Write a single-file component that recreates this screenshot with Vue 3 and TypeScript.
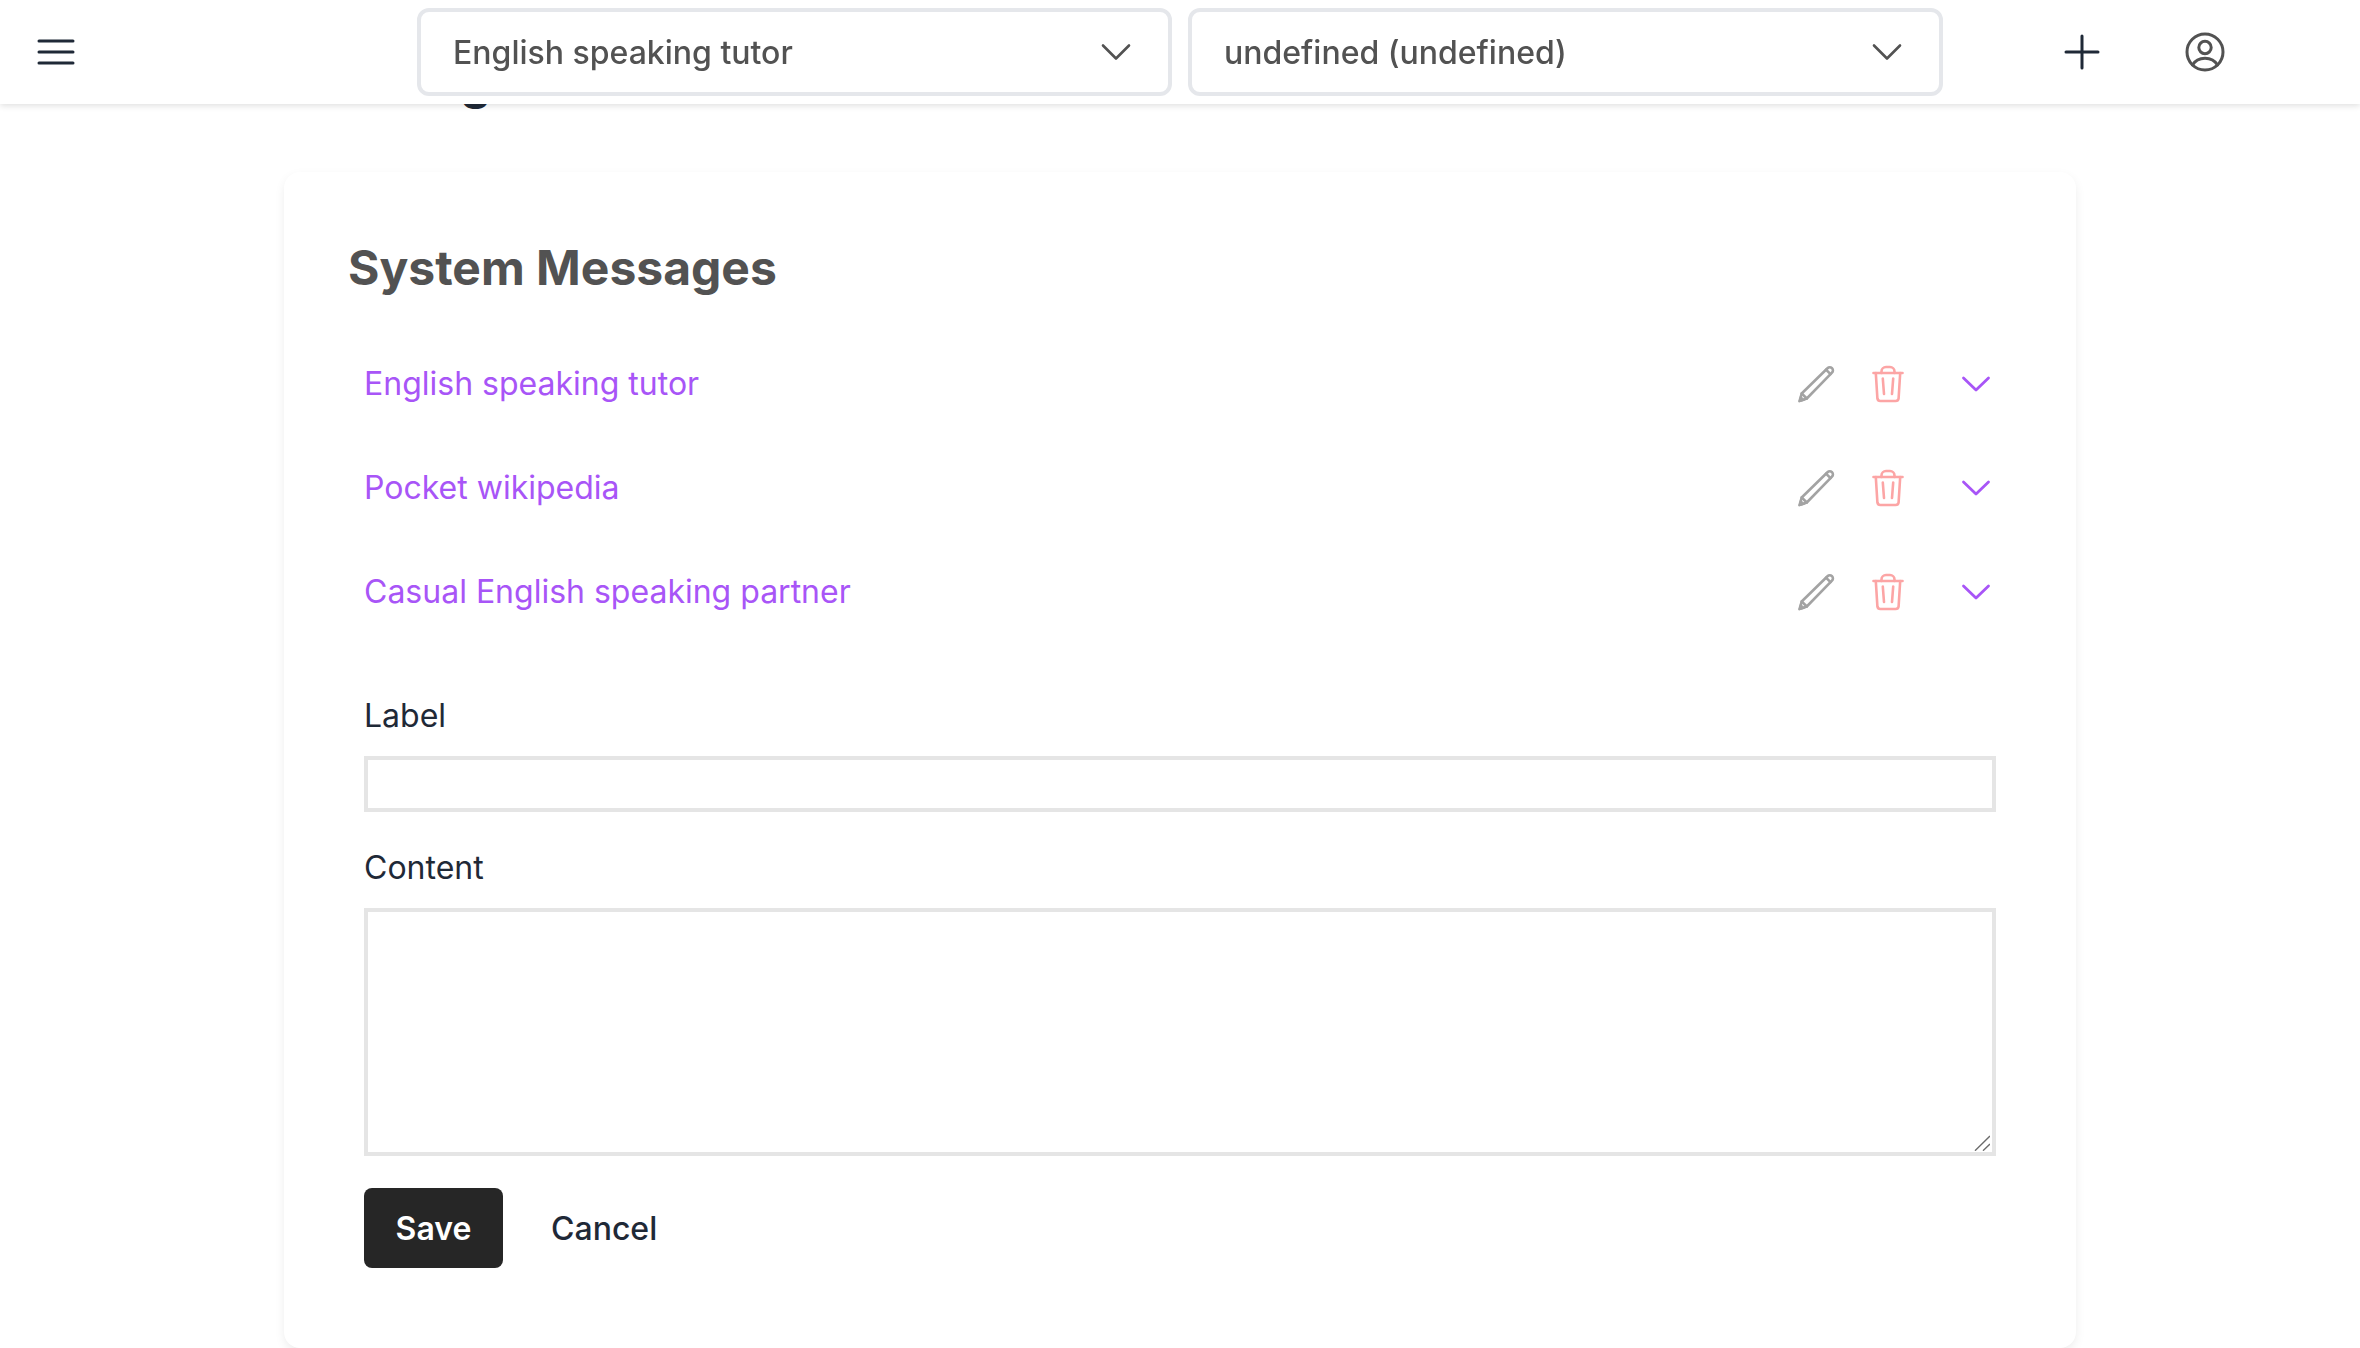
<script setup lang="ts">
const messages: string[] = ['English speaking tutor', 'Pocket wikipedia', 'Casual English speaking partner']
</script>

<template>
  <div class="page">
    <header class="topbar">
      <button class="icon-btn menu" aria-label="Menu">
        <svg width="48" height="48" viewBox="0 0 48 48" fill="none" stroke="#1f2937" stroke-width="3" stroke-linecap="round">
          <path d="M7 13h34M7 24h34M7 35h34" />
        </svg>
      </button>
      <div class="selector">
        <span>English speaking tutor</span>
        <svg width="32" height="32" viewBox="0 0 32 32" fill="none" stroke="#525252" stroke-width="2.6" stroke-linecap="round" stroke-linejoin="round"><path d="M3 9.500l13 13 13-13" /></svg>
      </div>
      <div class="selector second">
        <span>undefined (undefined)</span>
        <svg width="32" height="32" viewBox="0 0 32 32" fill="none" stroke="#525252" stroke-width="2.6" stroke-linecap="round" stroke-linejoin="round"><path d="M3 9.500l13 13 13-13" /></svg>
      </div>
      <button class="icon-btn plus" aria-label="Add">
        <svg width="48" height="48" viewBox="0 0 48 48" fill="none" stroke="#1f2937" stroke-width="3" stroke-linecap="round"><path d="M24 8v32M8 24h32" /></svg>
      </button>
      <button class="icon-btn user" aria-label="Account">
        <svg width="48" height="48" viewBox="0 0 48 48" fill="none" stroke="#525252" stroke-width="3" stroke-linecap="round"><circle cx="24" cy="24" r="18" /><circle cx="24" cy="19.500" r="6.200" /><path d="M11.500 37c2.500-4.400 7-6.800 12.500-6.800s10 2.400 12.500 6.800" /></svg>
      </button>
    </header>

    <main class="content">
      <h1 class="page-title">Settings</h1>
      <section class="card">
        <h2 class="card-title">System Messages</h2>
        <ul class="list">
          <li v-for="m in messages" :key="m" class="row">
            <a class="row-label">{{ m }}</a>
            <svg class="pencil" width="40" height="40" viewBox="0 0 40 40" fill="none" stroke="#a3a3a3" stroke-width="2.600" stroke-linejoin="round" stroke-linecap="round">
              <path d="M3.500 37l2.200-7.500L31.500 4.200a3.200 3.200 0 0 1 4.500 0 3.200 3.200 0 0 1 0 4.500L10.800 34.500z" />
              <path d="M5.700 29.500l5.100 5M30 5.700l4.500 4.500" />
              <path d="M3 37.500l1.500-5.500 4 4z" fill="#a3a3a3" stroke-width="1" />
            </svg>
            <svg class="trash" width="40" height="40" viewBox="0 0 40 40" fill="none" stroke="#fca5a5" stroke-width="2.600" stroke-linejoin="round" stroke-linecap="round">
              <path d="M5.500 9h29" />
              <path d="M13.500 9V7.500a4.500 4.500 0 0 1 4.500-4.500h4a4.500 4.500 0 0 1 4.500 4.500V9" />
              <path d="M7.800 9l1.600 25.500A3 3 0 0 0 12.400 37h15.200a3 3 0 0 0 3-2.500L32.200 9" />
              <path d="M14.800 14.500l1.200 15.500M25.200 14.500l-1.200 15.500" />
            </svg>
            <svg class="chev" width="40" height="40" viewBox="0 0 40 40" fill="none" stroke="#a855f7" stroke-width="2.800" stroke-linejoin="round" stroke-linecap="round">
              <path d="M7.500 14l12.500 12 12.500-12" />
            </svg>
          </li>
        </ul>
        <form class="form" @submit.prevent>
          <label class="field-label" for="label">Label</label>
          <input id="label" class="input" type="text" />
          <label class="field-label content-label" for="content">Content</label>
          <div class="textarea-wrap">
            <textarea id="content" class="textarea"></textarea>
            <svg class="grip" width="16" height="16" viewBox="0 0 16 16" fill="none" stroke="#6b6b6b" stroke-width="1.400"><path d="M1 15.700L16 1M9 15.700L16 9" /></svg>
          </div>
          <div class="actions">
            <button class="save" type="submit">Save</button>
            <button class="cancel" type="button">Cancel</button>
          </div>
        </form>
      </section>
    </main>
  </div>
</template>

<style>
html, body { margin: 0; background: #fff; overflow: hidden; }
</style>

<style scoped>
* { box-sizing: border-box; }
.page { font-family: Inter, "Liberation Sans", sans-serif; color: #1f2937; height: 1348px; overflow: hidden; }
.topbar {
  position: fixed; top: 0; left: 0; right: 0; z-index: 5;
  height: 104px; background: #fff;
  display: flex; align-items: center; padding-left: 32px;
  box-shadow: 0 2px 6px rgba(0, 0, 0, 0.12);
}
.icon-btn { width: 48px; height: 48px; padding: 0; border: 0; background: none; display: block; }
.icon-btn svg { display: block; }
.menu { margin-right: 337px; }
.selector {
  width: 755px; height: 88px; border: 4px solid #e5e7eb; border-radius: 12px;
  display: flex; align-items: center; justify-content: space-between;
  padding: 0 36px 0 32px;
  font-size: 32px; font-weight: 500; color: #525252;
}
.second { margin-left: 16px; }
.plus { margin-left: 115px; }
.user { margin-left: 75px; }
.content { padding-top: 50px; display: flex; flex-direction: column; }
.page-title { margin: 0 0 58px 324px; height: 64px; font-size: 48px; line-height: 64px; font-weight: 700; color: #1f2937; }
.card {
  margin-left: 284px; width: 1792px; height: 1176px; padding: 64px 80px 80px 64px;
  background: #fff; border-radius: 16px;
  box-shadow: 0 4px 12px -2px rgba(0, 0, 0, 0.1);
}
.card-title { margin: 0; font-size: 48px; line-height: 64px; font-weight: 700; color: #525252; }
.list { list-style: none; margin: 32px 0 48px; padding: 0 0 0 16px; }
.row { height: 104px; display: flex; align-items: center; }
.row-label { flex: 1; font-size: 32px; line-height: 48px; color: #a855f7; }
.row svg { display: block; }
.trash { margin-left: 32px; }
.chev { margin-left: 48px; }
.form { padding-left: 16px; display: flex; flex-direction: column; align-items: stretch; }
.field-label { font-size: 32px; line-height: 48px; margin-bottom: 16px; color: #1f2937; }
.content-label { margin-top: 32px; }
.input { display: block; width: 100%; height: 56px; border: 4px solid #e5e5e5; border-radius: 0; background: #fff; outline: none; }
.textarea-wrap { position: relative; height: 248px; }
.textarea { display: block; width: 100%; height: 248px; border: 4px solid #e5e5e5; border-radius: 0; background: #fff; outline: none; resize: none; }
.grip { position: absolute; right: 6px; bottom: 5px; pointer-events: none; }
.actions { margin-top: 32px; display: flex; align-items: center; }
.save {
  width: 139px; height: 80px; border: 0; border-radius: 8px; background: #262626; color: #fff;
  font-family: inherit; font-size: 32px; font-weight: 600;
}
.cancel {
  margin-left: 48px; padding: 0; border: 0; background: none; color: #1f2937;
  font-family: inherit; font-size: 32px; font-weight: 500;
}
</style>
